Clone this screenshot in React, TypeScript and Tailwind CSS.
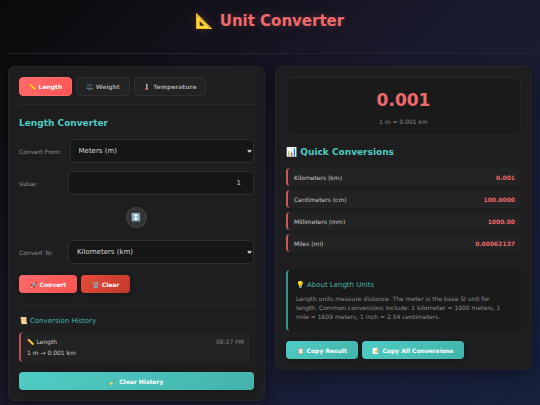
import { useState, type ReactNode } from "react";

const units = [
  { id: "m", label: "Meters (m)" },
  { id: "km", label: "Kilometers (km)" },
  { id: "cm", label: "Centimeters (cm)" },
  { id: "mm", label: "Millimeters (mm)" },
  { id: "mi", label: "Miles (mi)" },
];

const quick = [
  ["Kilometers (km)", "0.001"],
  ["Centimeters (cm)", "100.0000"],
  ["Millimeters (mm)", "1000.00"],
  ["Miles (mi)", "0.00062137"],
];

const tabs = [
  ["📏", "Length"],
  ["⚖️", "Weight"],
  ["🌡️", "Temperature"],
];

const field =
  "h-6 min-w-0 flex-1 rounded border border-[#2d2d30] bg-[#161616] text-[7px] text-[#d8d8d8] outline-none";

function UnitSelect({ id, label, initial }: { id: string; label: string; initial: string }) {
  const [value, setValue] = useState(initial);
  return (
    <div className="flex items-center gap-2">
      <label htmlFor={id} className="min-w-[41px] text-[6px] whitespace-nowrap text-[#8f8f8f]">
        {label}
      </label>
      <div className="relative flex flex-1">
        <select
          id={id}
          value={value}
          onChange={(e) => setValue(e.target.value)}
          className={`${field} appearance-none pl-2 pr-3`}
        >
          {units.map((u) => (
            <option key={u.id} value={u.id}>
              {u.label}
            </option>
          ))}
        </select>
        <svg
          viewBox="0 0 10 8"
          className="pointer-events-none absolute top-1/2 right-0.5 h-1 w-[5px] -translate-y-1/2"
          fill="none"
          stroke="#e8e8e8"
          strokeWidth="2.5"
        >
          <path d="M1.5 2l3.5 3.5L8.500 2" />
        </svg>
      </div>
    </div>
  );
}

function Card({ children }: { children: ReactNode }) {
  return (
    <section className="min-w-0 flex-1 rounded-md border border-[#252528] bg-[#1e1e20] p-2.5 shadow-[0_4px_16px_rgba(0,0,0,0.4)]">
      {children}
    </section>
  );
}

function ActionButton({ tone, children }: { tone: string; children: ReactNode }) {
  return (
    <button
      type="button"
      className={`h-[18px] rounded px-[11px] text-[6px] font-bold whitespace-nowrap text-white shadow-[0_1px_4px_rgba(0,0,0,0.3)] ${tone}`}
    >
      {children}
    </button>
  );
}

const teal = "bg-linear-135 from-[#4ecdc4] to-[#44b3ab]";

export default function App() {
  const [tab, setTab] = useState("Length");
  const [amount, setAmount] = useState("1");
  return (
    <div className="min-h-screen bg-linear-135 from-[#0a0a0a] via-[#1a1a2e] to-[#16213e] px-2 pb-1 font-['DejaVu_Sans','Noto_Color_Emoji',sans-serif] text-[6px] text-[#cccccc]">
      <header className="mb-3 flex h-[54px] justify-center border-b border-[#25252f] pt-[11px]">
        <h1 className="text-[15px] leading-5 font-bold text-[#f06a6c] [text-shadow:0_0_8px_rgba(255,107,107,0.3)]">
          📐 Unit Converter
        </h1>
      </header>

      <main className="flex items-start gap-2.5">
        <Card>
          <nav className="flex gap-1 border-b border-[#2a2a2c] pb-2">
            {tabs.map(([icon, name]) => (
              <button
                key={name}
                type="button"
                onClick={() => setTab(name)}
                className={`h-[19px] rounded border px-[9px] text-[6px] font-bold ${
                  tab === name
                    ? "border-[#ff6b6b] bg-linear-135 from-[#ff6b6b] to-[#ff5252] text-white"
                    : "border-[#303032] bg-[#232324] text-[#a0a0a0]"
                }`}
              >
                {icon} {name}
              </button>
            ))}
          </nav>

          <h2 className="mt-[11px] text-[9px] leading-[14px] font-bold text-[#4ecdc4]">Length Converter</h2>

          <div className="mt-[9px] flex flex-col gap-2">
            <UnitSelect id="from" label="Convert From:" initial="m" />
            <div className="flex items-center gap-2">
              <label htmlFor="amount" className="min-w-[41px] text-[6px] text-[#8f8f8f]">
                Value:
              </label>
              <input
                id="amount"
                inputMode="decimal"
                value={amount}
                onChange={(e) => setAmount(e.target.value)}
                className={`${field} pr-3 pl-2 text-right`}
              />
            </div>
          </div>

          <div className="my-3 flex justify-center">
            <button
              type="button"
              aria-label="Swap units"
              className="flex size-[21px] items-center justify-center rounded-full border border-[#48484a] bg-[#343436] text-[8px]"
            >
              ↕️
            </button>
          </div>

          <UnitSelect id="to" label="Convert To:" initial="km" />

          <div className="mt-[11px] flex gap-1">
            <ActionButton tone="bg-linear-135 from-[#ff6b6b] to-[#ff5252]">🚀 Convert</ActionButton>
            <ActionButton tone="bg-linear-135 from-[#e74c3c] to-[#c0392b]">🗑️ Clear</ActionButton>
          </div>

          <div className="mt-3 border-t border-[#2a2a2c] pt-2.5">
            <h3 className="text-[7px] leading-[10px] text-[#45b5ae]">📜 Conversion History</h3>
            <div className="mt-1.5 mr-1 rounded-sm border-l-2 border-[#b95355] bg-[#232324] px-1.5 py-1">
              <div className="flex items-center justify-between leading-[11px]">
                <span>📏 Length</span>
                <time className="text-[#808080]">08:27 PM</time>
              </div>
              <p className="leading-[11px]">1 m → 0.001 km</p>
            </div>
          </div>

          <div className="mt-2.5 grid">
            <ActionButton tone={teal}>🧹 Clear History</ActionButton>
          </div>
        </Card>

        <Card>
          <div className="flex h-[58px] flex-col items-center rounded border border-[#242426] bg-[#1a1a1a] pt-3">
            <output className="text-[17px] leading-5 font-bold text-[#f06a6c]">0.001</output>
            <p className="mt-2 leading-2 text-[#8f8f8f]">1 m = 0.001 km</p>
          </div>

          <h2 className="mt-2.5 text-[9px] leading-[14px] font-bold text-[#4ecdc4]">📊 Quick Conversions</h2>

          <dl className="mt-[9px] mb-[18px] flex flex-col gap-1">
            {quick.map(([name, value]) => (
              <div
                key={name}
                className="flex h-[18px] items-center justify-between rounded-sm border-l-2 border-[#c95a5c] bg-[#232324] px-1.5"
              >
                <dt>{name}</dt>
                <dd className="font-bold text-[#f06a6c]">{value}</dd>
              </div>
            ))}
          </dl>

          <div className="rounded-sm border-l-2 border-[#389490] bg-[#1a1a1b] py-2.5 pr-4 pl-2">
            <h3 className="text-[7px] leading-[10px] text-[#45b5ae]">💡 About Length Units</h3>
            <p className="mt-1 leading-[9px] text-[#8f8f8f]">
              Length units measure distance. The meter is the base SI unit for length. Common conversions include: 1
              kilometer = 1000 meters, 1 mile = 1609 meters, 1 inch = 2.54 centimeters.
            </p>
          </div>

          <div className="mt-2.5 flex gap-1">
            <ActionButton tone={teal}>📋 Copy Result</ActionButton>
            <ActionButton tone={teal}>📝 Copy All Conversions</ActionButton>
          </div>
        </Card>
      </main>
    </div>
  );
}
